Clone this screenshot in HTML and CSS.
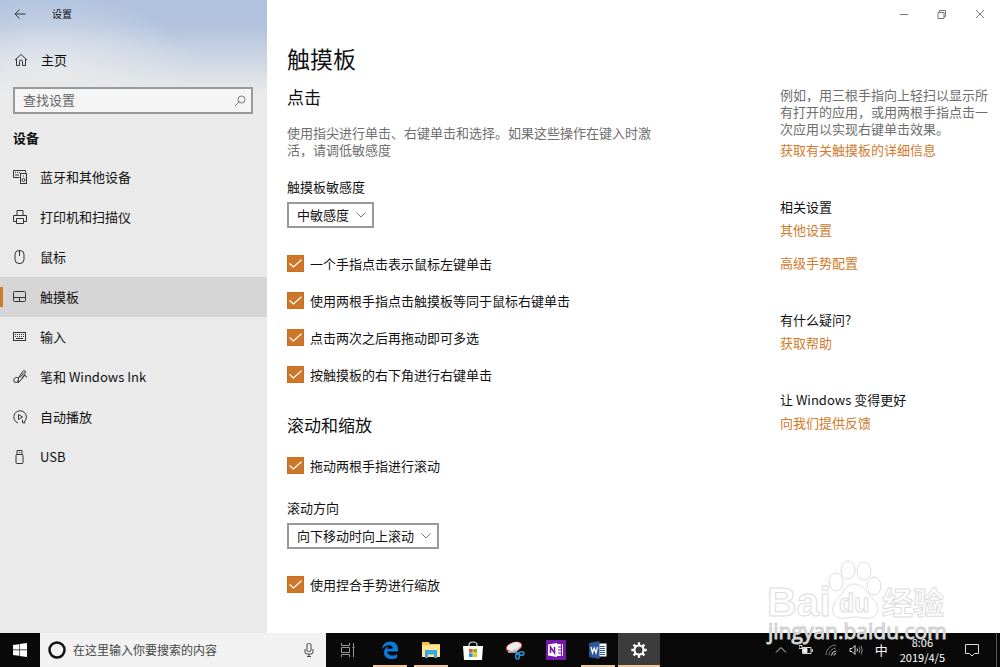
FILE: index.html
```html
<!DOCTYPE html>
<html lang="zh-CN">
<head>
  <meta charset="UTF-8">
  <meta name="viewport" content="width=device-width, initial-scale=1.0">
  <title>设置</title>
  <link rel="stylesheet" href="styles.css">
</head>
<body>
  <div class="window">
    <!-- Sidebar -->
    <aside class="sidebar">
      <div class="titlebar">
        <button type="button" class="back" aria-label="返回">
          <svg width="12" height="12" viewBox="0 0 12 12"><path d="M11.5 6H1M5.5 1.5L1 6l4.500 4.500"/></svg>
        </button>
        <span>设置</span>
      </div>
      <a href="#" class="home">
        <svg width="14" height="14" viewBox="0 0 14 14"><path d="M1 7l6-5.500L13 7M2.500 6v6.500h3V8.500a1.500 1.500 0 0 1 3 0v4h3V6"/></svg>
        主页
      </a>
      <div class="search">
        <input type="text" placeholder="查找设置" aria-label="查找设置">
        <svg width="12" height="12" viewBox="0 0 12 12"><circle cx="7.500" cy="4.500" r="3.500"/><path d="M5 7L1 11"/></svg>
      </div>
      <h2 class="group">设备</h2>
      <nav class="menu">
        <a href="#">
          <svg width="14" height="14" viewBox="0 0 14 14"><path d="M6.500 7.500h-6v-7h12v2M2 2.500h1M4 2.500h1M6 2.500h1M2 5h4"/><rect x="7.500" y="3.500" width="6" height="10"/><circle cx="10.500" cy="10" r="1.500"/><path d="M10 6h1"/></svg>
          蓝牙和其他设备
        </a>
        <a href="#">
          <svg width="14" height="14" viewBox="0 0 14 14"><path d="M4 5.500v-5h6v5M3.500 11.500h-3v-6h13v6h-3"/><path d="M3.500 8.500h7v5h-7z"/></svg>
          打印机和扫描仪
        </a>
        <a href="#">
          <svg width="14" height="14" viewBox="0 0 14 14"><rect x="2" y="0.500" width="9" height="13" rx="4"/><path d="M6.500 1v5"/></svg>
          鼠标
        </a>
        <a href="#" class="active">
          <svg width="14" height="14" viewBox="0 0 14 14"><rect x="0.500" y="1.500" width="12" height="10" rx="1"/><path d="M0.500 7.500h12M6.500 7.500V12"/></svg>
          触摸板
        </a>
        <a href="#">
          <svg width="14" height="14" viewBox="0 0 14 14"><rect x="0.500" y="2.500" width="12" height="8"/><path d="M2 4.500h9M2 6.500h9" stroke-dasharray="1 1"/><path d="M3 8.500h7"/></svg>
          输入
        </a>
        <a href="#">
          <svg width="14" height="14" viewBox="0 0 14 14"><path d="M5.500 8L9.500 1.500q1.500-1.500 2.500-.5t0 2.500L8 10l-3 3z"/><path d="M7 7.500l4-5M5.500 7.500Q1 7 .8 10t2.500 2.500q2 0 2-2.500M9.500 8.500q1-3 2.500-3t1.500 2"/></svg>
          笔和 Windows Ink
        </a>
        <a href="#">
          <svg width="14" height="14" viewBox="0 0 14 14"><path d="M5 13a6.300 6.300 0 1 1 6-1M9.500 9.800v3h3M5.500 4.500v5l4-2.500z"/></svg>
          自动播放
        </a>
        <a href="#">
          <svg width="14" height="14" viewBox="0 0 14 14"><path d="M4 4.500v-4h5v4M6 2.500h1"/><rect x="3" y="4.500" width="7" height="9" rx="1"/></svg>
          USB
        </a>
      </nav>
    </aside>

    <!-- Content -->
    <div class="page">
      <div class="caption">
        <button type="button" aria-label="最小化"><svg width="10" height="10" viewBox="0 0 10 10"><path d="M1 5.500h8"/></svg></button>
        <button type="button" aria-label="还原"><svg width="10" height="10" viewBox="0 0 10 10"><path d="M1 3.500h6v6H1zM2.500 3V1.500h6v6H7"/></svg></button>
        <button type="button" aria-label="关闭"><svg width="10" height="10" viewBox="0 0 10 10"><path d="M1 1l8 8M9 1L1 9"/></svg></button>
      </div>
      <div class="columns">
        <main class="settings">
          <h1>触摸板</h1>
          <h2>点击</h2>
          <p class="note">使用指尖进行单击、右键单击和选择。如果这些操作在键入时激活，请调低敏感度</p>
          <div class="field">
            <label for="sensitivity">触摸板敏感度</label>
            <select id="sensitivity">
              <option>中敏感度</option>
            </select>
          </div>
          <div class="checks">
            <label><input type="checkbox" checked>一个手指点击表示鼠标左键单击</label>
            <label><input type="checkbox" checked>使用两根手指点击触摸板等同于鼠标右键单击</label>
            <label><input type="checkbox" checked>点击两次之后再拖动即可多选</label>
            <label><input type="checkbox" checked>按触摸板的右下角进行右键单击</label>
          </div>
          <h2 class="scroll-title">滚动和缩放</h2>
          <div class="checks tight">
            <label><input type="checkbox" checked>拖动两根手指进行滚动</label>
          </div>
          <div class="field">
            <label for="direction">滚动方向</label>
            <select id="direction">
              <option>向下移动时向上滚动</option>
            </select>
          </div>
          <div class="checks">
            <label><input type="checkbox" checked>使用捏合手势进行缩放</label>
          </div>
        </main>

        <aside class="related">
          <section>
            <p class="note">例如，用三根手指向上轻扫以显示所有打开的应用，或用两根手指点击一次应用以实现右键单击效果。</p>
            <a href="#">获取有关触摸板的详细信息</a>
          </section>
          <section>
            <h3>相关设置</h3>
            <a href="#">其他设置</a>
            <a href="#" class="spaced">高级手势配置</a>
          </section>
          <section>
            <h3>有什么疑问?</h3>
            <a href="#">获取帮助</a>
          </section>
          <section>
            <h3>让 Windows 变得更好</h3>
            <a href="#">向我们提供反馈</a>
          </section>
        </aside>
      </div>
    </div>
  </div>

  <!-- Taskbar -->
  <footer class="taskbar">
    <button type="button" class="start" aria-label="开始">
      <svg width="14" height="14" viewBox="0 0 14 14"><path fill="#fff" d="M0 2l6-.8v5.400H0zM6.600 1.100L14 0v6.600H6.600zM0 7.200h6v5.500L0 12zM6.600 7.200H14V14l-7.400-1.100z"/></svg>
    </button>
    <div class="cortana">
      <svg width="18" height="18" viewBox="0 0 18 18"><circle cx="9" cy="9" r="7.500" fill="none" stroke="#111" stroke-width="2.500"/></svg>
      <input type="text" placeholder="在这里输入你要搜索的内容" aria-label="在这里输入你要搜索的内容">
      <svg class="mic" width="10" height="14" viewBox="0 0 10 14"><rect x="3" y="0.500" width="4" height="8" rx="1.500"/><path d="M1 6v3q0 2 2 2h4q2 0 2-2V6M5 11v2.500M3 13.500h4"/></svg>
    </div>
    <button type="button" class="taskview" aria-label="任务视图">
      <svg width="15" height="14" viewBox="0 0 15 14"><path d="M1.500 0v2.500h8V0M1.500 14v-2.500h8V14M1.500 4.500h8v5h-8zM13.500 0v14M12.500 4.500h2" fill="none" stroke="#999"/></svg>
    </button>
    <div class="apps">
      <button type="button" class="running" aria-label="Edge">
        <svg width="18" height="18" viewBox="0 0 18 18"><path fill="#0a7bd8" d="M1 8.200C1.500 3.500 4.500.5 9.200.5c5 0 7.800 3.500 7.800 8v2H6.200c.2 2.800 2.300 4 5 4 1.800 0 3.300-.5 4.800-1.300v3.500c-1.600.9-3.500 1.300-5.500 1.300-4.800 0-7.500-2.500-7.500-6.500 0-3 1.700-5.200 4.200-6.300-.7.800-1 1.600-1 2.500h5.600c0-2.200-1-3.500-3.300-3.500C5.500 4.200 2.500 5.800 1 8.200z"/></svg>
      </button>
      <button type="button" class="running" aria-label="文件资源管理器">
        <svg width="18" height="16" viewBox="0 0 18 16"><path fill="#f2c14b" d="M0 0h7l1 2h10v12H0z"/><path fill="#ffe694" d="M0 3h18v12H0z"/><path fill="#3ba7e0" d="M3 8h12v8h-3v-3.500H6V16H3z"/></svg>
      </button>
      <button type="button" aria-label="应用商店">
        <svg width="20" height="19" viewBox="0 0 20 19"><path fill="none" stroke="#ddd" stroke-width="1.200" d="M6 6V4q0-3 4-3t4 3v2"/><path fill="#fff" d="M0 5h20l-1 14H1z"/><path fill="#f25022" d="M6 8h3.700v3.700H6z"/><path fill="#7fba00" d="M10.300 8H14v3.700h-3.700z"/><path fill="#00a4ef" d="M6 12.300h3.700V16H6z"/><path fill="#ffb900" d="M10.300 12.300H14V16h-3.700z"/></svg>
      </button>
      <button type="button" aria-label="截图工具">
        <svg width="20" height="19" viewBox="0 0 20 19"><ellipse cx="9" cy="6" rx="8.500" ry="5" fill="#c33" transform="rotate(-18 9 6)"/><ellipse cx="9" cy="5.500" rx="7.500" ry="4" fill="#eee" transform="rotate(-18 9 5.500)"/><path d="M3 11h7l6-6M9 8l3 5" fill="none" stroke="#ccc" stroke-width="1.500"/><path d="M10 11l4 1" stroke="#2893d0" stroke-width="1.500"/><ellipse cx="12.500" cy="15.500" rx="1.800" ry="2.500" fill="none" stroke="#2893d0" stroke-width="1.500"/><ellipse cx="16.500" cy="12.500" rx="2.500" ry="1.800" fill="none" stroke="#2893d0" stroke-width="1.500"/></svg>
      </button>
      <button type="button" aria-label="OneNote">
        <svg width="20" height="20" viewBox="0 0 20 20"><path fill="#7719aa" d="M0 0h20v20H0z"/><path fill="#fff" d="M11 4h6v12h-6z"/><path fill="#fff" d="M2 4.500L11 3v14l-9-1.500z"/><path stroke="#7719aa" fill="none" d="M12 7h4M12 10h4M12 13h4M15.500 4v12"/><path stroke="#7719aa" stroke-width="1.500" fill="none" d="M4.500 13V7l4 6V7"/></svg>
      </button>
      <button type="button" class="running" aria-label="Word">
        <svg width="18" height="18" viewBox="0 0 18 18"><path fill="#fff" d="M9 2.500h8.500v13H9z"/><path stroke="#2b579a" fill="none" d="M11 5.500h5M11 7.500h5M11 9.500h5M11 11.500h5M11 13.500h5"/><path fill="#2b579a" d="M0 2l10.500-2v18L0 16z"/><path stroke="#fff" stroke-width="1.300" fill="none" d="M2 6l1.500 6L5.200 7 7 12l1.500-6"/></svg>
      </button>
      <button type="button" class="running current" aria-label="设置">
        <svg width="16" height="16" viewBox="0 0 16 16"><circle cx="8" cy="8" r="4.500" fill="none" stroke="#fff" stroke-width="2"/><path d="M8 .3v3M8 12.700v3M.3 8h3M12.700 8h3M2.600 2.600l2 2M11.400 11.400l2 2M13.400 2.600l-2 2M4.600 11.400l-2 2" stroke="#fff" stroke-width="2.300"/></svg>
      </button>
    </div>
    <div class="tray">
      <svg width="12" height="12" viewBox="0 0 12 12"><path d="M1 8.500l5-5 5 5"/></svg>
      <svg width="14" height="12" viewBox="0 0 14 12"><path d="M3.500 3.500h8.500v6H3.500zM12.500 5.500h1v2h-1M0 1.500h3v3H0z"/><path fill="#fff" d="M4.500 4.500H8v4H4.500z"/></svg>
      <svg width="12" height="12" viewBox="0 0 12 12"><path stroke="#777" d="M1 11A10 10 0 0 1 11 1M4 11.500A7.500 7.500 0 0 1 11 4"/><path d="M6.500 11.500A5 5 0 0 1 11 7M9 11.500a2 2 0 0 1 2-2"/></svg>
      <svg width="14" height="12" viewBox="0 0 14 12"><path d="M1 4.500h2L6 1.500v9l-3-3H1zM8 4.500q1 1.500 0 3"/><path stroke="#888" d="M10 3q2 3 0 6M12 1.500q2.500 4.500 0 9"/></svg>
      <span class="ime">中</span>
      <div class="clock"><span>8:06</span><span>2019/4/5</span></div>
      <svg width="14" height="14" viewBox="0 0 14 14"><path d="M.5 1.500h13v9H9.500L7 13l-2.500-2.500h-4z"/></svg>
    </div>
    <div class="desktop"></div>
  </footer>

  <!-- Watermark -->
  <svg class="watermark" width="182" height="92" viewBox="0 0 182 92">
    <g fill="#fff" stroke="#ddd" stroke-width="1">
      <ellipse cx="70" cy="24" rx="7" ry="9"/>
      <ellipse cx="82" cy="12" rx="7" ry="9"/>
      <ellipse cx="98" cy="13" rx="7" ry="9"/>
      <ellipse cx="108" cy="28" rx="7" ry="9"/>
      <path d="M88 26c-8 0-10 8-16 14-7 7-8 19 2 20 6 1 9-1 15-1s10 2 15 1c10-2 10-13 3-19-7-7-10-15-19-15z"/>
      <text class="mark-latin" x="1" y="58">Bai</text>
      <text class="mark-du" x="73" y="54">du</text>
      <text class="mark-cjk" x="116" y="56">经验</text>
    </g>
    <text class="mark-url" x="2" y="81">jingyan.baidu.com</text>
  </svg>
</body>
</html>
```
FILE: styles.css
```css
* {
  box-sizing: border-box;
}
body {
  margin: 0;
  height: 100vh;
  display: flex;
  flex-direction: column;
  overflow: hidden;
  font-family: "Noto Sans CJK SC", "Open Sans", sans-serif;
  font-size: 13px;
  line-height: 18px;
  color: #111;
  background: #fff;
}
h1, h2, h3, p {
  margin: 0;
  font-weight: normal;
}
a {
  text-decoration: none;
  color: inherit;
}
button {
  display: flex;
  align-items: center;
  justify-content: center;
  padding: 0;
  border: 0;
  background: none;
}
input, select {
  font: inherit;
  color: inherit;
}
svg {
  flex: none;
}
.window svg {
  fill: none;
  stroke: #333;
}
.window {
  flex: 1;
  min-height: 0;
  display: flex;
}

/* Sidebar */
.sidebar {
  flex: none;
  width: 267px;
  background:
    linear-gradient(to bottom, transparent 24px, #eaeaea 94px),
    radial-gradient(150px 80px at 50px 75px, #e2e6ec, transparent),
    #b0c2de;
}
.titlebar {
  display: flex;
  align-items: center;
  gap: 26px;
  height: 27px;
  padding-left: 14px;
  font-size: 10px;
}
.home {
  display: flex;
  align-items: center;
  gap: 13px;
  height: 40px;
  margin-top: 13px;
  padding-left: 14px;
}
.search {
  display: flex;
  align-items: center;
  height: 27px;
  margin: 7px 14px 0 13px;
  padding: 0 5px 0 8px;
  border: 2px solid #999;
  background: #f5f5f5;
}
.search input, .cortana input {
  flex: 1;
  min-width: 0;
  height: 18px;
  padding: 0;
  border: 0;
  outline: 0;
  background: none;
}
.search input {
  height: 20px;
  padding-bottom: 2px;
}
.search input::placeholder {
  color: #666;
}
.search svg {
  stroke: #777;
}
.sidebar .group {
  margin: 15px 0 10px 13px;
  font-size: 13px;
  font-weight: bold;
  line-height: 18px;
}
.menu a {
  display: flex;
  align-items: center;
  gap: 13px;
  height: 40px;
  padding-left: 13px;
}
.menu .active {
  background: linear-gradient(#d27a2c, #d27a2c) left center / 3px 20px no-repeat #d5d5d5;
}

/* Content */
.page {
  flex: 1;
  min-width: 0;
}
.caption {
  display: flex;
  justify-content: flex-end;
  height: 27px;
  padding-right: 1px;
}
.caption button {
  width: 38px;
}
.window .caption svg {
  stroke: #777;
}
.columns {
  display: flex;
  justify-content: space-between;
  padding: 0 8px 0 20px;
}
.settings {
  flex: 1;
  padding-top: 15px;
}
h1 {
  font-size: 23px;
  line-height: 32px;
}
h2 {
  margin-top: 11px;
  font-size: 17px;
  line-height: 24px;
}
.note {
  line-height: 17px;
  color: #6e6e6e;
}
.settings .note {
  max-width: 370px;
  margin: 15px 0 20px;
}
.field {
  display: flex;
  flex-direction: column;
  align-items: flex-start;
  gap: 6px;
}
select {
  appearance: none;
  height: 26px;
  padding: 0 22px 0 8px;
  border: 2px solid #999;
  border-radius: 0;
  background: url("data:image/svg+xml,%3Csvg xmlns='http://www.w3.org/2000/svg' width='10' height='6'%3E%3Cpath d='M.5.5L5 5 9.500.5' fill='none' stroke='%23777'/%3E%3C/svg%3E") right 6px center no-repeat #fff;
}
.checks {
  display: flex;
  flex-direction: column;
  gap: 20px;
  margin-top: 27px;
}
.checks label {
  display: flex;
  align-items: center;
  gap: 6px;
  height: 17px;
}
.checks input {
  appearance: none;
  width: 17px;
  height: 17px;
  margin: 0;
  border: 1px solid #c96f22;
}
.checks input:checked {
  background: url("data:image/svg+xml,%3Csvg xmlns='http://www.w3.org/2000/svg' width='13' height='9'%3E%3Cpath d='M.5 4.500l4 3.500L12.500.8' fill='none' stroke='%23fff' stroke-width='1.300'/%3E%3C/svg%3E") center no-repeat #cd772b;
}
.scroll-title {
  margin-top: 30px;
}
.tight {
  margin: 20px 0 25px;
}
.related {
  flex: none;
  width: 212px;
  padding-top: 59px;
}
.related section {
  display: flex;
  flex-direction: column;
  gap: 5px;
  margin-bottom: 39px;
}
.related .note {
  margin-bottom: -1px;
}
.related h3 {
  font-size: 13px;
}
.related a {
  color: #d27a2c;
}
.related .spaced {
  margin-top: 10px;
}

/* Taskbar */
.taskbar {
  flex: none;
  display: flex;
  height: 34px;
  background: #090909;
  color: #fff;
}
.start {
  width: 40px;
}
.cortana {
  flex: 0 1 286px;
  display: flex;
  align-items: center;
  gap: 7px;
  padding: 0 12px 0 8px;
  background: #f2f2f2;
  font-size: 12px;
}
.cortana input::placeholder {
  color: #444;
}
.mic {
  fill: none;
  stroke: #444;
}
.taskview {
  width: 43px;
}
.apps {
  flex: 0 1 291px;
  display: flex;
}
.apps button {
  flex: 1;
}
.apps .running {
  background: linear-gradient(#f0c8a0, #f0c8a0) center bottom / 34px 2px no-repeat;
}
.apps .current {
  background: linear-gradient(#f0c8a0, #f0c8a0) center bottom / 100% 2px no-repeat #3c3c3c;
}
.tray {
  display: flex;
  align-items: center;
  gap: 12px;
  margin-left: auto;
  padding-right: 17px;
}
.tray svg {
  fill: none;
  stroke: #ddd;
}
.clock {
  display: flex;
  flex-direction: column;
  align-items: center;
  margin-right: 8px;
  font-size: 11px;
  line-height: 15px;
}
.desktop {
  width: 4px;
  border-left: 1px solid #555;
}

.watermark {
  position: absolute;
  right: 52px;
  bottom: 17px;
  pointer-events: none;
}
.watermark text {
  font-family: "Liberation Sans", "Noto Sans CJK SC", sans-serif;
  font-weight: bold;
}
.watermark .mark-latin {
  font-size: 41px;
}
.watermark .mark-du {
  font-size: 25px;
}
.watermark .mark-cjk {
  font-size: 31px;
}
.watermark .mark-url {
  font-family: "Open Sans", sans-serif;
  font-size: 21px;
  font-weight: normal;
  fill: #eee;
  stroke: #ccc;
  stroke-width: 1px;
}
```
